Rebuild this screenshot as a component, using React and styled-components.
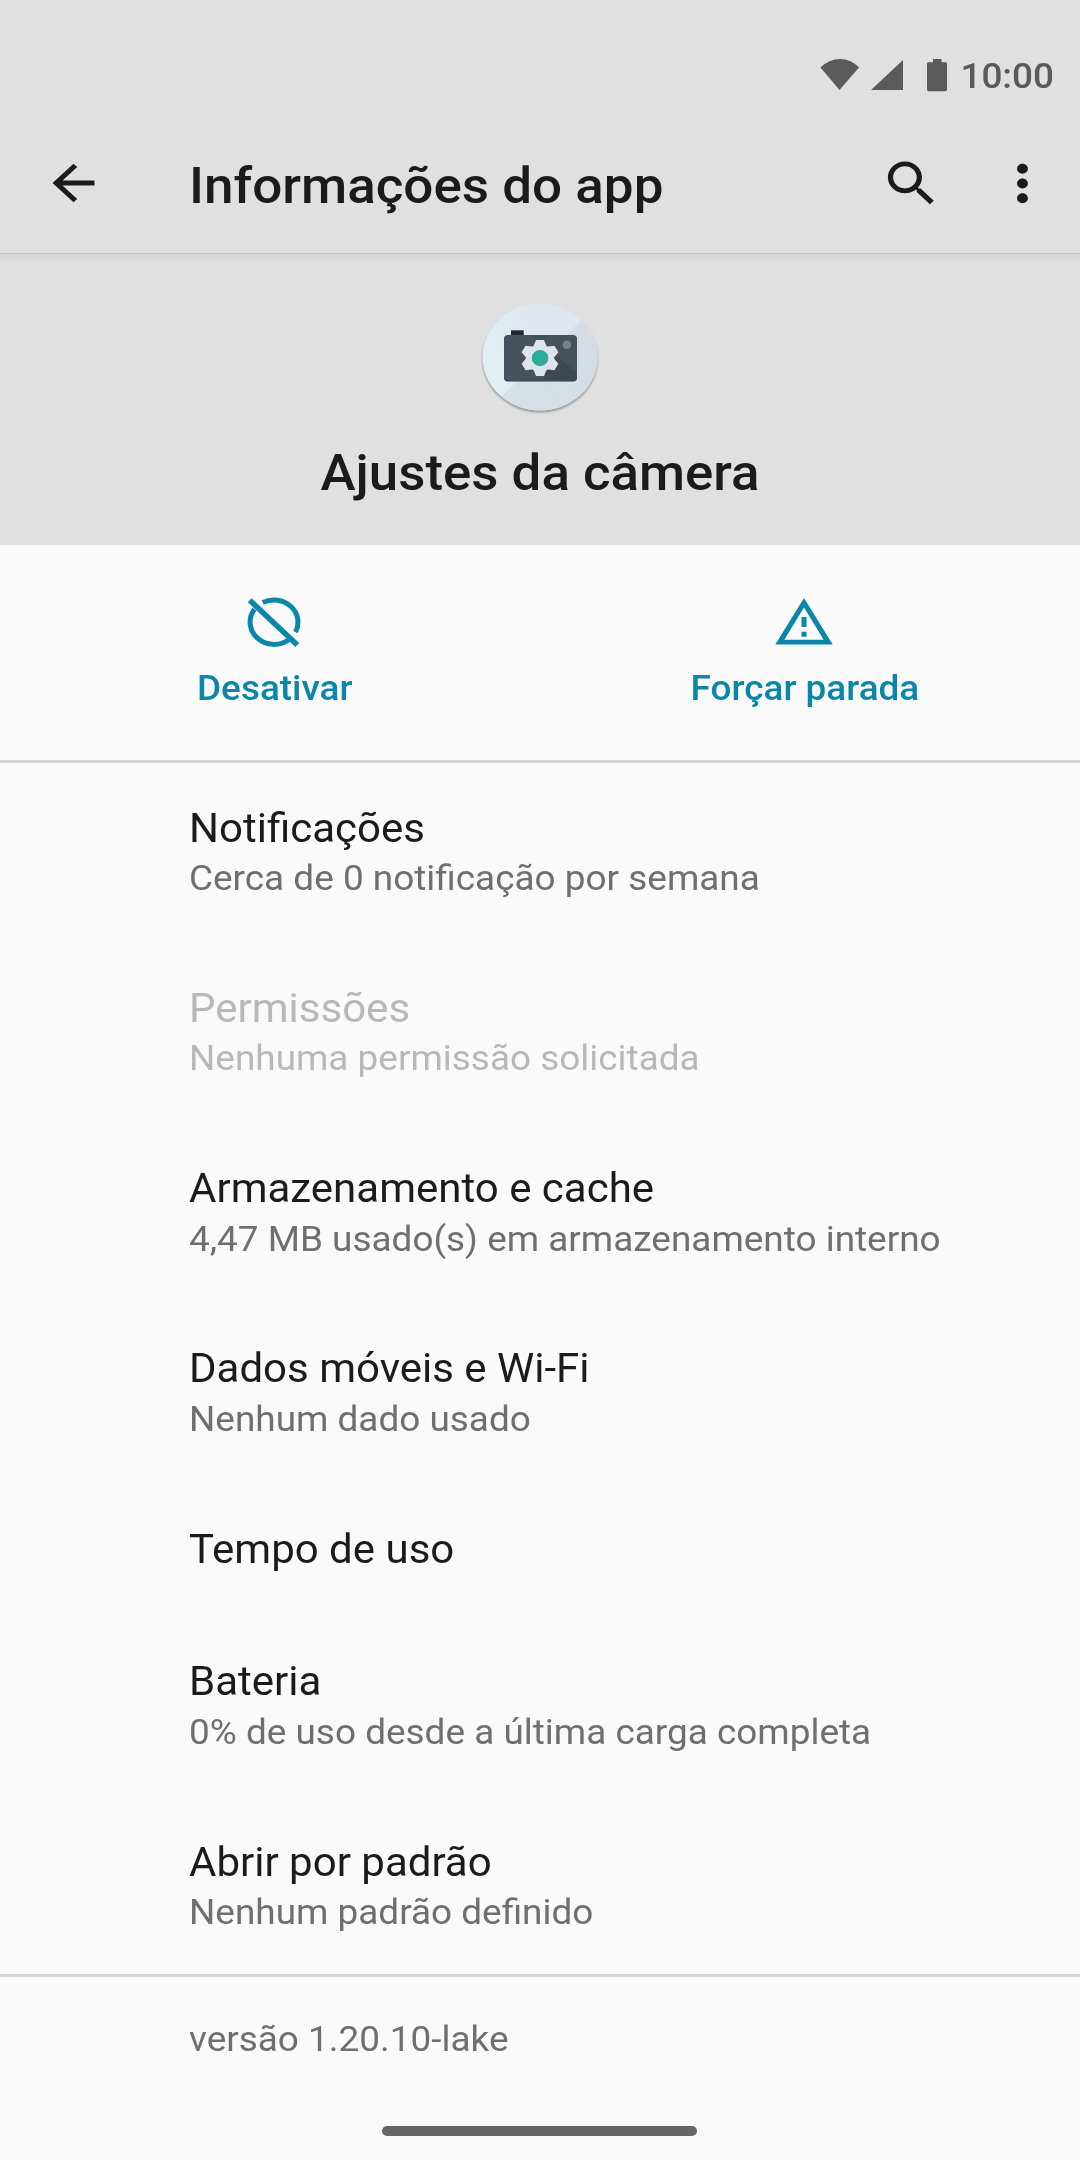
import React from "react";
import styled, { createGlobalStyle } from "styled-components";

const items = [
  { title: "Notificações", summary: "Cerca de 0 notificação por semana" },
  {
    title: "Permissões",
    summary: "Nenhuma permissão solicitada",
    disabled: true,
  },
  {
    title: "Armazenamento e cache",
    summary: "4,47 MB usado(s) em armazenamento interno",
  },
  { title: "Dados móveis e Wi-Fi", summary: "Nenhum dado usado" },
  { title: "Tempo de uso" },
  { title: "Bateria", summary: "0% de uso desde a última carga completa" },
  { title: "Abrir por padrão", summary: "Nenhum padrão definido" },
];

const StatusIcons = () => {
  return (
    <svg width="130" height="36" viewBox="0 0 130 36" fill="#5a5a5a">
      <path d="M0.5 10.5Q9 2 20 2T39 10.5L19.5 33Z" />
      <path d="M51 33L83 3V33Z" />
      <path d="M113 2h8.500v3.200h4.500q1 0 1 1.500v25.800q0 1.700-2 1.700h-16q-2 0-2-1.700V6.700q0-1.500 1-1.500h5Z" />
    </svg>
  );
};

const BackIcon = () => {
  return (
    <svg width="63" height="58" viewBox="0 0 24 24" preserveAspectRatio="none">
      <path
        fill="#1b1b1b"
        d="M20 11H7.830l5.590-5.590L12 4l-8 8 8 8 1.410-1.410L7.830 13H20v-2z"
      />
    </svg>
  );
};

const SearchIcon = () => {
  return (
    <svg width="63" height="59" viewBox="0 0 24 24" preserveAspectRatio="none">
      <path
        fill="#1b1b1b"
        d="M15.500 14h-.79l-.28-.27C15.410 12.590 16 11.110 16 9.500 16 5.910 13.090 3 9.500 3S3 5.910 3 9.500 5.910 16 9.500 16c1.610 0 3.090-.59 4.230-1.570l.27.28v.79l5 4.990L20.490 19l-4.990-5zm-6 0C7.010 14 5 11.990 5 9.500S7.010 5 9.500 5 14 7.010 14 9.500 11.990 14 9.500 14z"
      />
    </svg>
  );
};

const MoreIcon = () => {
  return (
    <svg width="65" height="59" viewBox="0 0 24 24" preserveAspectRatio="none">
      <path
        fill="#1b1b1b"
        d="M12 8c1.100 0 2-.9 2-2s-.9-2-2-2-2 .9-2 2 .9 2 2 2zm0 2c-1.100 0-2 .9-2 2s.9 2 2 2 2-.9 2-2-.9-2-2-2zm0 6c-1.100 0-2 .9-2 2s.9 2 2 2 2-.9 2-2-.9-2-2-2z"
      />
    </svg>
  );
};

const teeth = [0, 60, 120, 180, 240, 300];

const CameraIcon = () => {
  return (
    <svg width="124" height="116" viewBox="0 0 124 116">
      <defs>
        <linearGradient id="disc" x1="0" y1="0.6" x2="1" y2="0.3">
          <stop offset="0" stopColor="#e0f0f2" />
          <stop offset="0.5" stopColor="#dfe7f1" />
          <stop offset="1" stopColor="#e0e6f1" />
        </linearGradient>
        <linearGradient id="fold" x1="0" y1="1" x2="1" y2="0">
          <stop offset="0" stopColor="#d3e2e5" />
          <stop offset="1" stopColor="#d6dae3" />
        </linearGradient>
        <clipPath id="round">
          <ellipse cx="62" cy="57" rx="57.500" ry="53.500" />
        </clipPath>
        <filter id="soft" x="-10%" y="-10%" width="120%" height="125%">
          <feGaussianBlur stdDeviation="1.200" />
        </filter>
      </defs>
      <ellipse cx="62" cy="59" rx="57.500" ry="53.500" fill="#8f9799" filter="url(#soft)" />
      <ellipse cx="62" cy="57" rx="57.500" ry="53.500" fill="url(#disc)" />
      <path d="M12 107L124 1V116H12Z" fill="url(#fold)" clipPath="url(#round)" />
      <rect x="33" y="30.300" width="12.700" height="8" fill="#20272f" />
      <rect x="26" y="36" width="73" height="45.500" rx="4" fill="#303b46" />
      <rect x="26" y="35" width="73" height="45.500" rx="4" fill="#44525e" />
      <path d="M74 52L99 73V76.500Q99 80.500 95 80.500H66Z" fill="#3b4855" />
      <g transform="translate(62 58) scale(1.050 1)" fill="#dee4ef">
        <circle r="13.500" />
        {teeth.map((angle) => (
          <path
            key={angle}
            transform={`rotate(${angle})`}
            d="M-6.500 -11L-3.800 -18H3.800L6.500 -11Z"
          />
        ))}
      </g>
      <ellipse cx="62" cy="58" rx="8.300" ry="7.900" fill="#22b09b" />
      <path d="M56 63.500L68 52.500A8.300 7.900 0 0 1 56 63.500Z" fill="#38a79b" />
      <ellipse cx="89" cy="44.700" rx="4.400" ry="4.200" fill="#72818a" />
    </svg>
  );
};

const DisableIcon = () => {
  return (
    <svg width="54" height="50" viewBox="0 0 54 50" fill="none" stroke="#0a87a8">
      <path
        strokeWidth="5"
        d="M7.500 12.200A24 22.300 0 0 0 41.800 42.700M15.800 5.500A24 22.300 0 0 1 48.500 35.100"
      />
      <path strokeWidth="5.500" d="M2.700 3.300L50.300 48" />
    </svg>
  );
};

const WarningIcon = () => {
  return (
    <svg width="58" height="47" viewBox="0 0 58 47" fill="#0a87a8">
      <path fillRule="evenodd" d="M29 -0.500L57.700 46H0.300ZM29 9L9.300 41.200H48.700Z" />
      <path d="M26.500 18.500h5v10h-5zM26.500 33.300h5v5h-5z" />
    </svg>
  );
};

const App = () => {
  return (
    <Screen>
      <GlobalStyle />
      <StatusBar>
        <StatusIcons />
        <Clock>10:00</Clock>
      </StatusBar>
      <Toolbar>
        <IconButton aria-label="Voltar">
          <BackIcon />
        </IconButton>
        <ToolbarTitle>Informações do app</ToolbarTitle>
        <IconButton aria-label="Pesquisar">
          <SearchIcon />
        </IconButton>
        <IconButton aria-label="Mais opções">
          <MoreIcon />
        </IconButton>
      </Toolbar>
      <AppHeader>
        <CameraIcon />
        <AppName>Ajustes da câmera</AppName>
      </AppHeader>
      <Actions>
        <Action>
          <DisableIcon />
          <ActionLabel>Desativar</ActionLabel>
        </Action>
        <Action>
          <WarningIcon />
          <ActionLabel>Forçar parada</ActionLabel>
        </Action>
      </Actions>
      <List>
        {items.map((item) => (
          <Row key={item.title}>
            <RowTitle $disabled={item.disabled}>{item.title}</RowTitle>
            {item.summary && (
              <RowSummary $disabled={item.disabled}>{item.summary}</RowSummary>
            )}
          </Row>
        ))}
      </List>
      <Version>
        <RowSummary>versão 1.20.10-lake</RowSummary>
      </Version>
      <NavBar>
        <Handle />
      </NavBar>
    </Screen>
  );
};

const GlobalStyle = createGlobalStyle`
  * {
    box-sizing: border-box;
  }
  body {
    margin: 0;
    background: #fafafa;
    font-family: Roboto, sans-serif;
  }
  svg {
    display: block;
    flex-shrink: 0;
    overflow: visible;
  }
`;

const Screen = styled.div`
  width: 1080px;
  height: 2160px;
  display: flex;
  flex-direction: column;
  overflow: hidden;
  background: #fafafa;
  color: #1b1b1b;
`;

// All labels are set slightly wide.
const Label = styled.span`
  display: block;
  width: fit-content;
  white-space: nowrap;
  transform: scaleX(1.04);
  transform-origin: ${(props) => props.$origin || "left"} center;
`;

const StatusBar = styled.div`
  height: 113px;
  padding: 57px 26px 0 820px;
  display: flex;
  justify-content: space-between;
  background: #e0e0e0;
`;

const Clock = styled(Label).attrs({ $origin: "right" })`
  font-size: 35.5px;
  font-weight: 500;
  line-height: 38px;
  color: #5a5a5a;
`;

const Toolbar = styled.header`
  height: 140px;
  padding: 0 2px 0 18px;
  display: flex;
  align-items: center;
  background: #e0e0e0;
`;

const IconButton = styled.button`
  width: 111px;
  height: 111px;
  padding: 0;
  border: none;
  background: transparent;
  display: flex;
  align-items: center;
  justify-content: center;
`;

const ToolbarTitle = styled.h1`
  flex: 1;
  margin: 5px 0 0;
  padding-left: 60px;
  font-size: 50.8px;
  font-weight: 500;
  line-height: 60px;
  white-space: nowrap;
  transform: scaleX(1.043);
  transform-origin: 60px center;
`;

const AppHeader = styled.section`
  height: 292px;
  padding-top: 47px;
  display: flex;
  flex-direction: column;
  align-items: center;
  background: linear-gradient(#c4c4c4 1px, #d6d6d6 1px, #e0e0e0 10px);
`;

const AppName = styled(Label).attrs({ as: "h2", $origin: "center" })`
  margin: 27px 0 0;
  font-size: 50.8px;
  font-weight: 500;
  line-height: 60px;
`;

const Actions = styled.section`
  height: 218px;
  padding: 52px 11px 0 9px;
  display: grid;
  grid-template-columns: 1fr 1fr;
  border-bottom: 3px solid #d6d6d6;
`;

const Action = styled.div`
  display: flex;
  flex-direction: column;
  align-items: center;
  justify-content: flex-start;
  color: #0a87a8;

  svg {
    height: 50px;
  }
`;

const ActionLabel = styled(Label).attrs({ $origin: "center" })`
  margin: 20px 0 0 1px;
  font-size: 35.5px;
  font-weight: 500;
  line-height: 42px;
`;

const List = styled.main`
  height: 1214px;
  border-bottom: 3px solid #d6d6d6;
`;

const Row = styled.div`
  padding: 38.6px 0 40.7px 189px;
`;

const RowTitle = styled(Label)`
  font-size: 40.4px;
  line-height: 53.4px;
  color: ${(props) => (props.$disabled ? "#b8b8b8" : "#1b1b1b")};
`;

const RowSummary = styled(Label)`
  font-size: 35.5px;
  line-height: 47.6px;
  color: ${(props) => (props.$disabled ? "#b8b8b8" : "#6f6f6f")};
`;

const Version = styled.footer`
  padding: 38.5px 0 0 189px;
`;

const NavBar = styled.nav`
  margin-top: auto;
  height: 34px;
  padding-right: 1px;
  display: flex;
  justify-content: center;
`;

const Handle = styled.div`
  width: 315px;
  height: 10px;
  border-radius: 5px;
  background: #666;
`;

export default App;
